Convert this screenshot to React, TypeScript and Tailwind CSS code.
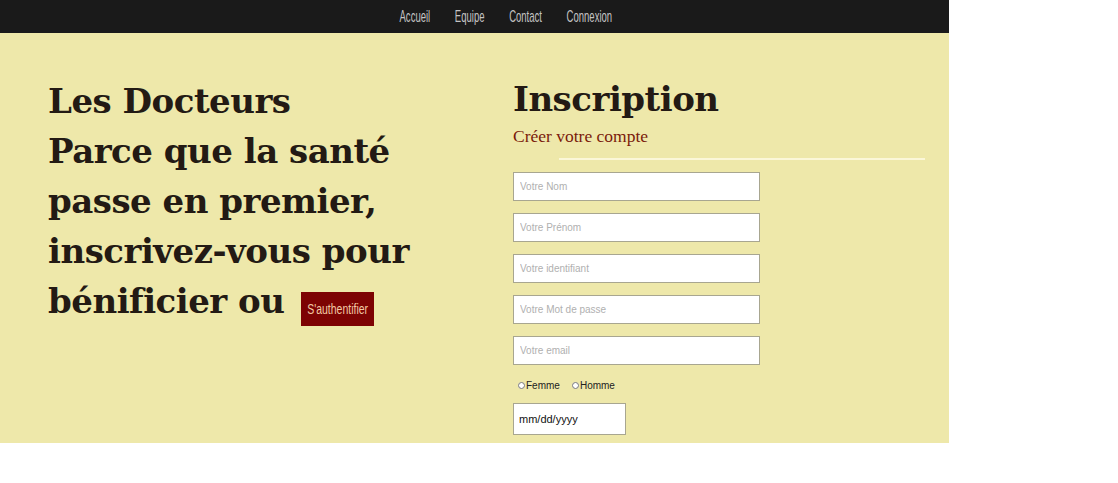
import React from 'react';

const navLinks = ['Accueil', 'Equipe', 'Contact', 'Connexion'];

const fields = ['Votre Nom', 'Votre Prénom', 'Votre identifiant', 'Votre Mot de passe', 'Votre email'];

const Field: React.FC<{ placeholder: string }> = ({ placeholder }) => (
  <input
    type="text"
    placeholder={placeholder}
    className="block w-[247px] h-[29px] bg-white border border-[#a8a690] px-[6px] text-[10px] text-[#555] placeholder:text-[#b0b0b0] font-['Liberation_Sans',sans-serif] outline-none"
  />
);

export default function App() {
  return (
    <div className="w-[949px] font-['DejaVu_Serif',serif]">
      <nav className="h-[33px] bg-[#1a1a1a] flex items-center justify-center pl-[62px]">
        <div className="flex gap-[44px] scale-x-[0.56] font-['Liberation_Sans',sans-serif]">
          {navLinks.map((l) => (
            <a key={l} href="#" className="text-[#c4c4c4] text-[17px] leading-[20px]">
              {l}
            </a>
          ))}
        </div>
      </nav>

      <main className="h-[410px] bg-[#eee8aa] flex pt-[43px]">
        <section className="w-[513px] pl-[48px]">
          <h1 className="text-[#231a14] font-bold text-[34px] leading-[50px] tracking-[-0.5px]">
            Les Docteurs
            <br />
            Parce que la santé
            <br />
            passe en premier,
            <br />
            inscrivez-vous pour
            <br />
            bénificier ou{' '}
            <button className="ml-[5px] align-middle bg-[#7d0303] w-[73px] h-[34px] relative top-[5px] inline-flex items-center justify-center">
              <span className="scale-x-[0.75] text-[#f2c9a3] text-[14px] leading-none font-['Liberation_Sans',sans-serif] font-normal tracking-normal whitespace-nowrap">
                S'authentifier
              </span>
            </button>
          </h1>
        </section>

        <section className="flex-1">
          <h2 className="text-[#231a14] font-bold text-[34px] leading-[46px] tracking-[-0.5px]">Inscription</h2>
          <p className="text-[#7a1a0a] text-[17.5px] leading-[22px] font-['Liberation_Serif',serif] mt-[3px]">
            Créer votre compte
          </p>
          <div className="ml-[46px] mr-[24px] mt-[11px] h-[2px] bg-[#fbf7d8]" />

          <form className="mt-[12px] flex flex-col gap-[12px]">
            {fields.map((f) => (
              <Field key={f} placeholder={f} />
            ))}
          </form>

          <div className="flex items-center gap-[12px] mt-[13px] pl-[5px] text-[10px] text-[#222] font-['Liberation_Sans',sans-serif]">
            <label className="flex items-center">
              <input type="radio" name="sexe" className="w-[7px] h-[7px] m-0 mr-[1px] accent-gray-400" />
              Femme
            </label>
            <label className="flex items-center">
              <input type="radio" name="sexe" className="w-[7px] h-[7px] m-0 mr-[1px] accent-gray-400" />
              Homme
            </label>
          </div>

          <div className="mt-[10px] w-[113px] h-[32px] bg-white border border-[#a8a690] flex items-center px-[5px] text-[11px] text-[#111] font-['Liberation_Sans',sans-serif]">
            mm/dd/yyyy
          </div>
        </section>
      </main>
    </div>
  );
}
